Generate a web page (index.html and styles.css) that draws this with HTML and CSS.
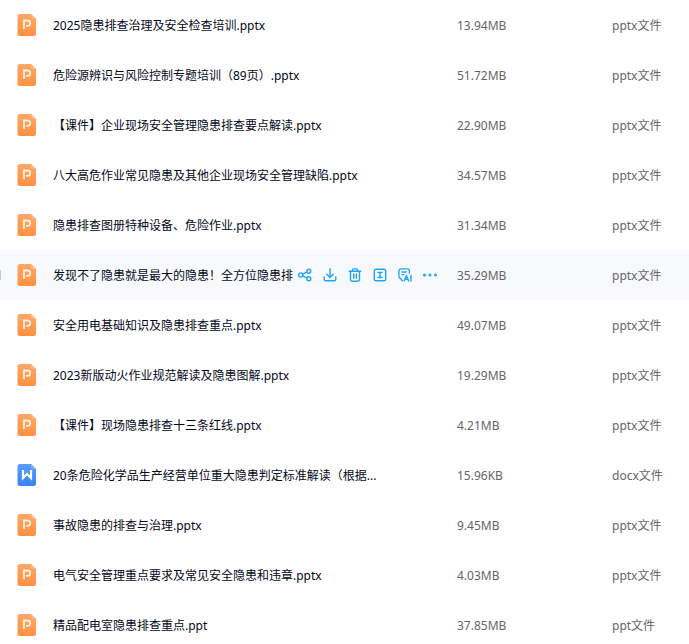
FILE: index.html
```html
<!DOCTYPE html>
<html lang="zh-CN">
<head>
    <meta charset="UTF-8">
    <meta name="viewport" content="width=device-width, initial-scale=1.0">
    <title>文件列表</title>
    <link rel="stylesheet" href="styles.css">
</head>
<body>
    <!-- Shared icons -->
    <svg class="sprite" aria-hidden="true">
        <defs>
            <linearGradient id="orange" x1="0" y1="0" x2="0" y2="1">
                <stop offset="0" stop-color="#ffa768"/>
                <stop offset="1" stop-color="#ff9140"/>
            </linearGradient>
            <linearGradient id="blue" x1="0" y1="0" x2="0" y2="1">
                <stop offset="0" stop-color="#5a9dff"/>
                <stop offset="1" stop-color="#3a82f7"/>
            </linearGradient>
        </defs>
        <symbol id="icon-ppt" viewBox="0 0 20 22">
            <path d="M3 0h11l5 5v14.500a2.500 2.500 0 0 1-2.500 2.500H3a2.500 2.500 0 0 1-2.500-2.500V2.500A2.500 2.500 0 0 1 3 0z" fill="url(#orange)"/>
            <path d="M14 0l5 5h-3.500a1.500 1.500 0 0 1-1.500-1.500z" fill="#ffb784"/>
            <path d="M7 15V6.500h3.500a2.700 2.700 0 0 1 0 5.400H9" fill="none" stroke="#fff1e2" stroke-width="1.800"/>
        </symbol>
        <symbol id="icon-doc" viewBox="0 0 20 22">
            <path d="M3 0h11l5 5v14.500a2.500 2.500 0 0 1-2.500 2.500H3a2.500 2.500 0 0 1-2.500-2.500V2.500A2.500 2.500 0 0 1 3 0z" fill="url(#blue)"/>
            <path d="M14 0l5 5h-3.500a1.500 1.500 0 0 1-1.500-1.500z" fill="#7fb2ff"/>
            <path d="M6 6v8l4-4 4 4V6" fill="none" stroke="#fff" stroke-width="2.200"/>
        </symbol>
    </svg>

    <main class="file-list">
        <table class="file-table">
            <colgroup>
                <col class="col-icon">
                <col class="col-name">
                <col class="col-size">
                <col class="col-type">
            </colgroup>
            <tbody>
                <tr>
                    <td class="icon"><svg class="file-icon"><use href="#icon-ppt"/></svg></td>
                    <td class="name"><a href="#">2025隐患排查治理及安全检查培训.pptx</a></td>
                    <td>13.94MB</td>
                    <td>pptx文件</td>
                </tr>
                <tr>
                    <td class="icon"><svg class="file-icon"><use href="#icon-ppt"/></svg></td>
                    <td class="name"><a href="#">危险源辨识与风险控制专题培训（89页）.pptx</a></td>
                    <td>51.72MB</td>
                    <td>pptx文件</td>
                </tr>
                <tr>
                    <td class="icon"><svg class="file-icon"><use href="#icon-ppt"/></svg></td>
                    <td class="name"><a href="#">【课件】企业现场安全管理隐患排查要点解读.pptx</a></td>
                    <td>22.90MB</td>
                    <td>pptx文件</td>
                </tr>
                <tr>
                    <td class="icon"><svg class="file-icon"><use href="#icon-ppt"/></svg></td>
                    <td class="name"><a href="#">八大高危作业常见隐患及其他企业现场安全管理缺陷.pptx</a></td>
                    <td>34.57MB</td>
                    <td>pptx文件</td>
                </tr>
                <tr>
                    <td class="icon"><svg class="file-icon"><use href="#icon-ppt"/></svg></td>
                    <td class="name"><a href="#">隐患排查图册特种设备、危险作业.pptx</a></td>
                    <td>31.34MB</td>
                    <td>pptx文件</td>
                </tr>
                <tr class="active">
                    <td class="icon">
                        <input type="checkbox" class="row-check" aria-label="选择文件">
                        <svg class="file-icon"><use href="#icon-ppt"/></svg>
                    </td>
                    <td class="name">
                        <div class="name-row">
                            <a href="#">发现不了隐患就是最大的隐患！全方位隐患排</a>
                            <div class="actions">
                                <button type="button" aria-label="分享">
                                    <svg viewBox="0 0 14 14"><circle cx="2.700" cy="7" r="2.100"/><circle cx="10.800" cy="3.300" r="2"/><circle cx="10.800" cy="10.700" r="2"/><path d="M4.700 6.100l4.200-1.900M4.700 7.900l4.200 1.900"/></svg>
                                </button>
                                <button type="button" aria-label="下载">
                                    <svg viewBox="0 0 14 14"><path d="M7 .8v8.400M3.800 6.200L7 9.400l3.200-3.200M1.200 9v2.200a1.600 1.600 0 0 0 1.600 1.600h8.400a1.600 1.600 0 0 0 1.600-1.600V9"/></svg>
                                </button>
                                <button type="button" aria-label="删除">
                                    <svg viewBox="0 0 14 14"><path d="M1.200 3.300h11.600M4.500 3V1.900a1 1 0 0 1 1-1h3a1 1 0 0 1 1 1V3M2.500 3.500v8a1.700 1.700 0 0 0 1.700 1.700h5.600a1.700 1.700 0 0 0 1.700-1.700v-8M5.700 6v4.200M8.300 6v4.200"/></svg>
                                </button>
                                <button type="button" aria-label="重命名">
                                    <svg viewBox="0 0 14 14"><rect x="1.300" y="1.300" width="11.400" height="11.400" rx="1.500"/><path d="M5 4.500h4M7 4.500v5M5 9.500h4"/></svg>
                                </button>
                                <button type="button" aria-label="AI 文档">
                                    <svg viewBox="0 0 14 14"><path d="M4.600 12.500H3.800L3 10.500A2.100 2.100 0 0 1 .9 8.400V3A2.100 2.100 0 0 1 3 .9h6.300A2.100 2.100 0 0 1 11.400 3v2.200M4 4h4.300M4 6.600h2"/><path d="M6.200 13l2.200-5.500 2.300 5.500M7.200 11.300h2.500M13 7.500V13"/></svg>
                                </button>
                                <button type="button" aria-label="更多">
                                    <svg viewBox="0 0 14 14" class="solid"><circle cx="1.500" cy="7" r="1.500"/><circle cx="7" cy="7" r="1.500"/><circle cx="12.500" cy="7" r="1.500"/></svg>
                                </button>
                            </div>
                        </div>
                    </td>
                    <td>35.29MB</td>
                    <td>pptx文件</td>
                </tr>
                <tr>
                    <td class="icon"><svg class="file-icon"><use href="#icon-ppt"/></svg></td>
                    <td class="name"><a href="#">安全用电基础知识及隐患排查重点.pptx</a></td>
                    <td>49.07MB</td>
                    <td>pptx文件</td>
                </tr>
                <tr>
                    <td class="icon"><svg class="file-icon"><use href="#icon-ppt"/></svg></td>
                    <td class="name"><a href="#">2023新版动火作业规范解读及隐患图解.pptx</a></td>
                    <td>19.29MB</td>
                    <td>pptx文件</td>
                </tr>
                <tr>
                    <td class="icon"><svg class="file-icon"><use href="#icon-ppt"/></svg></td>
                    <td class="name"><a href="#">【课件】现场隐患排查十三条红线.pptx</a></td>
                    <td>4.21MB</td>
                    <td>pptx文件</td>
                </tr>
                <tr>
                    <td class="icon"><svg class="file-icon"><use href="#icon-doc"/></svg></td>
                    <td class="name"><a href="#">20条危险化学品生产经营单位重大隐患判定标准解读（根据...</a></td>
                    <td>15.96KB</td>
                    <td>docx文件</td>
                </tr>
                <tr>
                    <td class="icon"><svg class="file-icon"><use href="#icon-ppt"/></svg></td>
                    <td class="name"><a href="#">事故隐患的排查与治理.pptx</a></td>
                    <td>9.45MB</td>
                    <td>pptx文件</td>
                </tr>
                <tr>
                    <td class="icon"><svg class="file-icon"><use href="#icon-ppt"/></svg></td>
                    <td class="name"><a href="#">电气安全管理重点要求及常见安全隐患和违章.pptx</a></td>
                    <td>4.03MB</td>
                    <td>pptx文件</td>
                </tr>
                <tr>
                    <td class="icon"><svg class="file-icon"><use href="#icon-ppt"/></svg></td>
                    <td class="name"><a href="#">精品配电室隐患排查重点.ppt</a></td>
                    <td>37.85MB</td>
                    <td>ppt文件</td>
                </tr>
            </tbody>
        </table>
    </main>
</body>
</html>
```

FILE: styles.css
```css
body {
    font-family: "Noto Sans", "Noto Sans CJK SC", sans-serif;
    font-size: 12px;
    line-height: 18px;
    background-color: #fff;
    color: #666;
    margin: 0;
}

.sprite {
    position: absolute;
    width: 0;
    height: 0;
}

.file-list {
    height: 100vh;
    overflow: hidden;
}

.file-table {
    width: 100%;
    table-layout: fixed;
    border-collapse: collapse;
}

.col-icon {
    width: 53px;
}

.col-size {
    width: 155px;
}

.col-type {
    width: 77px;
}

td {
    box-sizing: border-box;
    height: 50px;
    padding: 2px 0 0;
    white-space: nowrap;
}

.icon {
    position: relative;
    padding: 0 0 0 17px;
}

.file-icon {
    display: block;
    width: 20px;
    height: 22px;
}

.name a {
    color: #03081a;
    text-decoration: none;
}

.active {
    background-color: #f8f9fc;
}

/* Checkbox hangs over the left edge, only its border shows */
.row-check {
    appearance: none;
    box-sizing: border-box;
    position: absolute;
    top: 19px;
    left: -12px;
    width: 13px;
    height: 12px;
    margin: 0;
    border: 1px solid #c4c6cc;
    border-radius: 2px;
}

.name-row {
    display: flex;
    align-items: center;
    padding-right: 20px;
}

.name-row a {
    flex: 1;
    min-width: 0;
    overflow: hidden;
}

.actions {
    display: flex;
    gap: 11px;
    margin: 0 0 2px 5px;
}

.actions button {
    width: 14px;
    height: 14px;
    padding: 0;
    border: 0;
    background: none;
    cursor: pointer;
}

.actions svg {
    display: block;
    width: 14px;
    height: 14px;
    fill: none;
    stroke: #1fa6f5;
    stroke-width: 1.4;
    stroke-linecap: round;
    stroke-linejoin: round;
}

.actions .solid {
    fill: #1fa6f5;
    stroke: none;
}
```
